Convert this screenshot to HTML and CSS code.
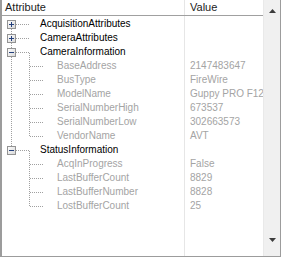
FILE: index.html
```html
<!DOCTYPE html>
<html lang="en">
<head>
    <meta charset="UTF-8">
    <title>Camera attributes</title>
    <link rel="stylesheet" href="styles.css">
</head>
<body>
    <svg class="defs" width="0" height="0">
        <defs>
            <linearGradient id="boxFill" x1="0" y1="0" x2="1" y2="1">
                <stop offset="0" stop-color="#ffffff"/>
                <stop offset="1" stop-color="#d6d6d6"/>
            </linearGradient>
            <symbol id="plus" viewBox="0 0 9 9">
                <rect x=".5" y=".5" width="8" height="8" fill="url(#boxFill)" stroke="#939393"/>
                <path d="M2 4.5h5M4.5 2v5" stroke="#24407c"/>
            </symbol>
            <symbol id="minus" viewBox="0 0 9 9">
                <rect x=".5" y=".5" width="8" height="8" fill="url(#boxFill)" stroke="#939393"/>
                <path d="M2 4.5h5" stroke="#24407c"/>
            </symbol>
        </defs>
    </svg>

    <div class="grid-view">
        <div class="list">
            <div class="header">
                <div class="col-attr">Attribute</div>
                <div class="col-value">Value</div>
            </div>
            <div class="rows">
                <!-- root nodes -->
                <div class="row">
                    <div class="name">
                        <svg width="38" height="14"><path class="tree-line" d="M9.5 8V14"/><path class="tree-line" d="M14 7.5H28"/><use href="#plus" x="5" y="3" width="9" height="9"/></svg>
                        <span>AcquisitionAttributes</span>
                    </div>
                    <div class="value"></div>
                </div>
                <div class="row">
                    <div class="name">
                        <svg width="38" height="14"><path class="tree-line" d="M9.5 0V14"/><path class="tree-line" d="M14 7.5H28"/><use href="#plus" x="5" y="3" width="9" height="9"/></svg>
                        <span>CameraAttributes</span>
                    </div>
                    <div class="value"></div>
                </div>
                <div class="row">
                    <div class="name">
                        <svg width="38" height="14"><path class="tree-line" d="M9.5 0V14"/><path class="tree-line" d="M14 7.5H28"/><path class="tree-line" d="M27.5 8V14"/><use href="#minus" x="5" y="3" width="9" height="9"/></svg>
                        <span>CameraInformation</span>
                    </div>
                    <div class="value"></div>
                </div>

                <div class="row child">
                    <div class="name">
                        <svg width="55" height="14"><path class="tree-line" d="M9.5 0V14"/><path class="tree-line" d="M27.5 0V14"/><path class="tree-line" d="M28 7.5H42"/></svg>
                        <span>BaseAddress</span>
                    </div>
                    <div class="value">2147483647</div>
                </div>
                <div class="row child">
                    <div class="name">
                        <svg width="55" height="14"><path class="tree-line" d="M9.5 0V14"/><path class="tree-line" d="M27.5 0V14"/><path class="tree-line" d="M28 7.5H42"/></svg>
                        <span>BusType</span>
                    </div>
                    <div class="value">FireWire</div>
                </div>
                <div class="row child">
                    <div class="name">
                        <svg width="55" height="14"><path class="tree-line" d="M9.5 0V14"/><path class="tree-line" d="M27.5 0V14"/><path class="tree-line" d="M28 7.5H42"/></svg>
                        <span>ModelName</span>
                    </div>
                    <div class="value">Guppy PRO F125B</div>
                </div>
                <div class="row child">
                    <div class="name">
                        <svg width="55" height="14"><path class="tree-line" d="M9.5 0V14"/><path class="tree-line" d="M27.5 0V14"/><path class="tree-line" d="M28 7.5H42"/></svg>
                        <span>SerialNumberHigh</span>
                    </div>
                    <div class="value">673537</div>
                </div>
                <div class="row child">
                    <div class="name">
                        <svg width="55" height="14"><path class="tree-line" d="M9.5 0V14"/><path class="tree-line" d="M27.5 0V14"/><path class="tree-line" d="M28 7.5H42"/></svg>
                        <span>SerialNumberLow</span>
                    </div>
                    <div class="value">302663573</div>
                </div>
                <div class="row child">
                    <div class="name">
                        <svg width="55" height="14"><path class="tree-line" d="M9.5 0V14"/><path class="tree-line" d="M27.5 0V8"/><path class="tree-line" d="M28 7.5H42"/></svg>
                        <span>VendorName</span>
                    </div>
                    <div class="value">AVT</div>
                </div>

                <div class="row">
                    <div class="name">
                        <svg width="38" height="14"><path class="tree-line" d="M9.5 0V8"/><path class="tree-line" d="M14 7.5H28"/><path class="tree-line" d="M27.5 8V14"/><use href="#minus" x="5" y="3" width="9" height="9"/></svg>
                        <span>StatusInformation</span>
                    </div>
                    <div class="value"></div>
                </div>

                <div class="row child">
                    <div class="name">
                        <svg width="55" height="14"><path class="tree-line" d="M27.5 0V14"/><path class="tree-line" d="M28 7.5H42"/></svg>
                        <span>AcqInProgress</span>
                    </div>
                    <div class="value">False</div>
                </div>
                <div class="row child">
                    <div class="name">
                        <svg width="55" height="14"><path class="tree-line" d="M27.5 0V14"/><path class="tree-line" d="M28 7.5H42"/></svg>
                        <span>LastBufferCount</span>
                    </div>
                    <div class="value">8829</div>
                </div>
                <div class="row child">
                    <div class="name">
                        <svg width="55" height="14"><path class="tree-line" d="M27.5 0V14"/><path class="tree-line" d="M28 7.5H42"/></svg>
                        <span>LastBufferNumber</span>
                    </div>
                    <div class="value">8828</div>
                </div>
                <div class="row child">
                    <div class="name">
                        <svg width="55" height="14"><path class="tree-line" d="M27.5 0V8"/><path class="tree-line" d="M28 7.5H42"/></svg>
                        <span>LostBufferCount</span>
                    </div>
                    <div class="value">25</div>
                </div>
            </div>
        </div>

        <div class="scrollbar">
            <svg class="arrow" width="7" height="4"><path d="M0 4H7L3.5 0z"/></svg>
            <svg class="arrow" width="7" height="4"><path d="M0 0H7L3.5 4z"/></svg>
        </div>
    </div>
</body>
</html>
```

FILE: styles.css
```css
body {
    margin: 0;
    background-color: #fff;
    font-family: 'Liberation Sans', Tahoma, sans-serif;
}
.defs {
    display: block;
    width: 0;
    height: 0;
}
.grid-view {
    width: 281px;
    height: 257px;
    box-sizing: border-box;
    display: flex;
    border-left: 2px solid #9c9c9c;
    border-right: 1px solid #9c9c9c;
    border-bottom: 1px solid #9c9c9c;
    background-color: #fff;
}
.list {
    flex: 1;
    min-width: 0;
    display: flex;
    flex-direction: column;
    /* column divider down the whole list */
    background: linear-gradient(to right, transparent 182px, #e6e6e6 182px, #e6e6e6 183px, transparent 183px);
}
.header {
    display: grid;
    grid-template-columns: 183px 1fr;
    height: 16px;
    box-sizing: border-box;
    border-bottom: 1px solid #a0a0a0;
    background-color: #fff;
    font-size: 11px;
    line-height: 15px;
    color: #1c1c1c;
}
.header .col-attr {
    padding-left: 3px;
    border-right: 1px solid #e6e6e6;
}
.header .col-value {
    padding-left: 5px;
}
.rows {
    padding-top: 1px;
    font-size: 10px;
}
.row {
    display: grid;
    grid-template-columns: 182px 1fr;
    height: 14px;
    line-height: 14px;
    color: #000;
}
.name {
    display: flex;
    align-items: center;
    white-space: nowrap;
    overflow: hidden;
}
.name svg {
    flex: none;
    display: block;
}
.child .name span {
    color: #a4a4a4;
}
.value {
    padding-left: 6px;
    white-space: nowrap;
    overflow: hidden;
    color: #a4a4a4;
}
.tree-line {
    fill: none;
    stroke: #a0a0a0;
    stroke-dasharray: 1 1;
    shape-rendering: crispEdges;
}
.scrollbar {
    width: 17px;
    box-sizing: border-box;
    display: flex;
    flex-direction: column;
    align-items: center;
    justify-content: space-between;
    padding: 9px 0 14px;
    background-color: #f0f0f0;
    border-left: 1px solid #e9e9e9;
}
.arrow {
    display: block;
    fill: #3c3c3c;
}
```
